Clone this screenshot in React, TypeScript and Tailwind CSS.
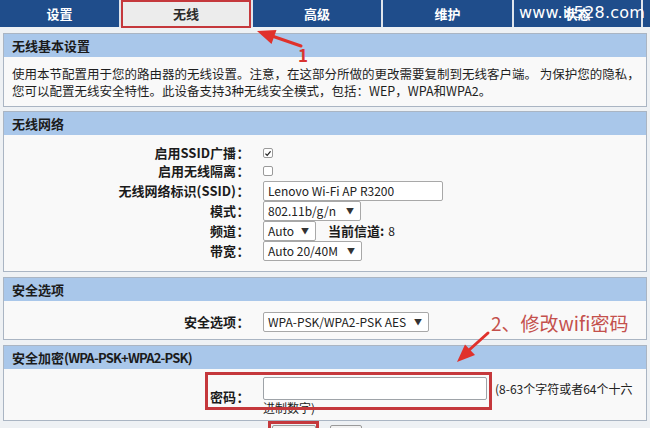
import React from "react";

const font = "font-['Noto_Sans_CJK_SC','Noto_Sans',sans-serif]";

type SectionProps = {
  title: React.ReactNode;
  className?: string;
  bodyClassName?: string;
  children: React.ReactNode;
};

const Section = ({ title, className = "", bodyClassName = "", children }: SectionProps) => (
  <section className={`mx-[3px] border border-[#aab5c3] ${className}`}>
    <h2 className="flex h-[23px] items-center bg-[#a9c7ea] px-[8px] text-[13px] font-bold text-[#1b1b1b]">
      {title}
    </h2>
    <div className={`bg-[#f9f9f9] ${bodyClassName}`}>{children}</div>
  </section>
);

type RowProps = {
  label: string;
  className?: string;
  children: React.ReactNode;
};

const Row = ({ label, className = "h-[20px]", children }: RowProps) => (
  <div className={`flex items-center ${className}`}>
    <div className="flex w-[246px] items-center justify-end text-[13px] font-bold text-[#1b1b1b]">
      <span>{label}</span>
      <span className="w-[14px] text-center">：</span>
    </div>
    <div className="ml-[13px] flex flex-1 items-center text-[12px] text-[#222]">{children}</div>
  </div>
);

const Select = ({ value, width }: { value: string; width: string }) => (
  <div
    className={`flex h-[20px] items-center justify-between rounded-[2px] border border-[#a8a8a8] bg-white pl-[4px] pr-[6px] text-[12px] text-[#222] ${width}`}
  >
    <span>{value}</span>
    <span className="text-[8px] text-[#333]">▼</span>
  </div>
);

const Checkbox = ({ checked }: { checked?: boolean }) => (
  <span className="flex h-[10px] w-[10px] items-center justify-center rounded-[2px] border border-[#9a9a9a] bg-white">
    {checked && (
      <svg viewBox="0 0 10 10" className="h-[9px] w-[9px]">
        <path d="M1.8 5.2 L4 7.4 L8.2 2.4" fill="none" stroke="#222" strokeWidth="1.6" />
      </svg>
    )}
  </span>
);

const tabs = [
  { label: "设置", w: "w-[119px]" },
  { label: "无线", w: "w-[130px]", active: true },
  { label: "高级", w: "w-[128px]" },
  { label: "维护", w: "w-[129px]" },
  { label: "状态", w: "w-[127px]" },
];

export default function App() {
  return (
    <div className={`relative h-[428px] w-[650px] overflow-hidden bg-[#eef1f4] ${font}`}>
      {/* top menu */}
      <nav className="flex h-[27px] gap-[2px] bg-[#dfe5ec]">
        {tabs.map((t) =>
          t.active ? (
            <div
              key={t.label}
              className={`${t.w} flex h-[28px] items-center justify-center border-2 border-[#c5383c] bg-[#ececec] text-[13px] font-bold text-[#2a2a2a]`}
            >
              {t.label}
            </div>
          ) : (
            <div
              key={t.label}
              className={`${t.w} flex items-center justify-center bg-[#1f4d8b] text-[13px] font-bold text-white`}
            >
              {t.label}
            </div>
          )
        )}
        <div className="flex-1 bg-[#1f4d8b]" />
      </nav>

      <Section title="无线基本设置" className="mt-[6px]" bodyClassName="px-[8px] pt-[8px] pb-[7px]">
        <p className="whitespace-nowrap text-[12.5px] leading-[17px] text-[#1e1e1e]">
          使用本节配置用于您的路由器的无线设置。注意，在这部分所做的更改需要复制到无线客户端。 为保护您的隐私，
          <br />
          您可以配置无线安全特性。此设备支持3种无线安全模式，包括：WEP，WPA和WPA2。
        </p>
      </Section>

      <Section title="无线网络" className="mt-[4px]" bodyClassName="pt-[9px] pb-[10px]">
        <Row label="启用SSID广播" className="h-[18px]">
          <Checkbox checked />
        </Row>
        <Row label="启用无线隔离" className="h-[18px]">
          <Checkbox />
        </Row>
        <Row label="无线网络标识(SSID)" className="h-[21px]">
          <div className="flex h-[20px] w-[180px] items-center rounded-[2px] border border-[#a8a8a8] bg-white px-[4px]">
            Lenovo Wi-Fi AP R3200
          </div>
        </Row>
        <Row label="模式">
          <Select value="802.11b/g/n" width="w-[98px]" />
        </Row>
        <Row label="频道">
          <Select value="Auto" width="w-[53px]" />
          <span className="ml-[12px] text-[13px] font-bold text-[#1b1b1b]">当前信道:</span>
          <span className="ml-[4px]">8</span>
        </Row>
        <Row label="带宽">
          <Select value="Auto 20/40M" width="w-[99px]" />
        </Row>
      </Section>

      <Section title="安全选项" className="mt-[5px]" bodyClassName="pt-[11px] pb-[7px]">
        <Row label="安全选项">
          <Select value="WPA-PSK/WPA2-PSK AES" width="w-[166px]" />
        </Row>
      </Section>

      <Section
        title={
          <>
            安全加密<span className="tracking-[-0.8px]">(WPA-PSK+WPA2-PSK)</span>
          </>
        }
        className="mt-[5px]"
        bodyClassName="pt-[8px] pb-[4px]"
      >
        <Row label="密码" className="h-auto">
          <div className="whitespace-nowrap text-[12px] text-[#222]">
            <div className="flex items-center">
              <div className="h-[23px] w-[224px] rounded-[2px] border border-[#9ea3a8] bg-white" />
              <span className="ml-[8px]">(8-63个字符或者64个十六</span>
            </div>
            <div className="leading-[16px]">进制数字)</div>
          </div>
        </Row>
      </Section>

      <div className="flex gap-[14px] pl-[272px] pt-[4px]">
        <button className="h-[22px] w-[44px] rounded-[2px] border border-[#9a9a9a] bg-[#f2f2f2] text-[12px]">保存</button>
        <button className="h-[22px] w-[32px] rounded-[2px] border border-[#9a9a9a] bg-[#f2f2f2] text-[12px]">取消</button>
      </div>

      {/* site watermark over the last tab */}
      <span className="absolute left-[519px] top-[3px] font-['DejaVu_Sans',sans-serif] text-[16px] leading-[20px] tracking-[0.2px] text-white">
        www.it528.com
      </span>

      {/* annotation marks */}
      <div className="absolute left-[205px] top-[372px] h-[38px] w-[287px] border-[3px] border-[#c5383c]" />
      <div className="absolute left-[268px] top-[421px] h-[20px] w-[51px] border-[3px] border-[#c5383c]" />
      <span className="absolute left-[298px] top-[45px] text-[17px] font-bold leading-[20px] text-[#d9342f]">1</span>
      <span className="absolute left-[491px] top-[310px] text-[19px] leading-[26px] text-[#c4504c]">2、修改wifi密码</span>
      <svg className="pointer-events-none absolute left-0 top-0" width="650" height="428" viewBox="0 0 650 428">
        <line x1="301" y1="46" x2="272" y2="36" stroke="#e0312c" strokeWidth="3" strokeLinecap="round" />
        <polygon points="257,31 276.5,30 271.5,44" fill="#e0312c" />
        <line x1="488" y1="333" x2="468" y2="351" stroke="#e0312c" strokeWidth="3" strokeLinecap="round" />
        <polygon points="457,362 475,355 465,344.5" fill="#e0312c" />
      </svg>
    </div>
  );
}
